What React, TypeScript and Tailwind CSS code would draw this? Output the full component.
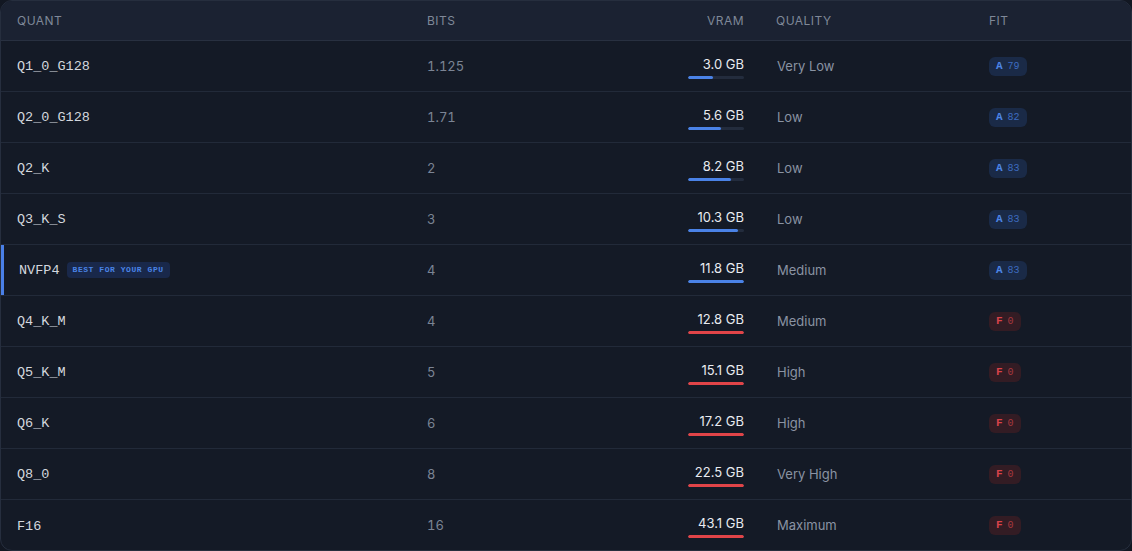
type Row = {
  quant: string;
  bits: string;
  vram: string;
  pct: number;
  fits: boolean;
  quality: string;
  score: number;
  best?: boolean;
};

const rows: Row[] = [
  { quant: 'Q1_0_G128', bits: '1.125', vram: '3.0 GB', pct: 45, fits: true, quality: 'Very Low', score: 79 },
  { quant: 'Q2_0_G128', bits: '1.71', vram: '5.6 GB', pct: 59, fits: true, quality: 'Low', score: 82 },
  { quant: 'Q2_K', bits: '2', vram: '8.2 GB', pct: 77, fits: true, quality: 'Low', score: 83 },
  { quant: 'Q3_K_S', bits: '3', vram: '10.3 GB', pct: 89, fits: true, quality: 'Low', score: 83 },
  { quant: 'NVFP4', bits: '4', vram: '11.8 GB', pct: 100, fits: true, quality: 'Medium', score: 83, best: true },
  { quant: 'Q4_K_M', bits: '4', vram: '12.8 GB', pct: 100, fits: false, quality: 'Medium', score: 0 },
  { quant: 'Q5_K_M', bits: '5', vram: '15.1 GB', pct: 100, fits: false, quality: 'High', score: 0 },
  { quant: 'Q6_K', bits: '6', vram: '17.2 GB', pct: 100, fits: false, quality: 'High', score: 0 },
  { quant: 'Q8_0', bits: '8', vram: '22.5 GB', pct: 100, fits: false, quality: 'Very High', score: 0 },
  { quant: 'F16', bits: '16', vram: '43.1 GB', pct: 100, fits: false, quality: 'Maximum', score: 0 },
];

const cols = 'grid grid-cols-[410px_160px_189px_213px_1fr] items-center';
const mono = "font-['Liberation_Mono',monospace]";

function FitBadge({ fits, score }: { fits: boolean; score: number }) {
  return (
    <span
      className={`flex h-[19px] items-center gap-[5px] rounded-md px-[7px] text-[11px] ${mono} ${
        fits ? 'bg-[#1a2a47] text-[#4d86e8]' : 'bg-[#331c24] text-[#d9434a]'
      }`}
    >
      <span className="font-bold">{fits ? 'A' : 'F'}</span>
      <span className={`text-[10px] ${fits ? 'text-[#3d6cc0]' : 'text-[#a8383f]'}`}>{score}</span>
    </span>
  );
}

export default function App() {
  return (
    <div className="h-[551px] w-full bg-[#121722] font-['Inter',sans-serif]">
      <div className="h-full overflow-hidden rounded-xl border border-[#262e3e] bg-[#141a26]">
        {/* Header */}
        <div className={`${cols} h-[40px] border-b border-[#283040] bg-[#1b2232] text-[12px] uppercase tracking-[0.04em] text-[#7f8898]`}>
          <div className="px-4">Quant</div>
          <div className="px-4">Bits</div>
          <div className="px-4 text-right">VRAM</div>
          <div className="px-4">Quality</div>
          <div className="px-4">Fit</div>
        </div>

        {rows.map((r, i) => (
          <div
            key={r.quant}
            className={`${cols} h-[51px] ${i < rows.length - 1 ? 'border-b border-[#222a39]' : ''} ${
              r.best ? 'shadow-[inset_3px_0_0_#4a80e8]' : ''
            }`}
          >
            <div className={`flex items-center gap-[7px] ${r.best ? 'pl-[18px]' : 'pl-4'}`}>
              <span className={`pt-[3px] text-[13.5px] text-[#d3d7de] ${mono}`}>{r.quant}</span>
              {r.best && (
                <span
                  className={`rounded-[4px] bg-[#19284a] px-[6px] py-[3px] text-[8px] font-bold leading-[10px] tracking-[0.07em] text-[#4a84e6] ${mono}`}
                >
                  BEST FOR YOUR GPU
                </span>
              )}
            </div>
            <div className="px-4 pt-[1px] text-[13px] tabular-nums text-[#7b8494]">{r.bits}</div>
            <div className="flex flex-col items-end px-4 pt-[2px]">
              <span className="text-[13px] leading-[16px] text-[#e8ebf0]">{r.vram}</span>
              <div className="mt-[4px] h-[3px] w-[56px] overflow-hidden rounded-full bg-[#232c3d]">
                <div
                  className={`h-full rounded-full ${r.fits ? 'bg-[#4a82e6]' : 'bg-[#e04448]'}`}
                  style={{ width: `${r.pct}%` }}
                />
              </div>
            </div>
            <div className="pl-[17px] pt-[1px] text-[13px] text-[#8a93a3]">{r.quality}</div>
            <div className="flex px-4">
              <FitBadge fits={r.fits} score={r.score} />
            </div>
          </div>
        ))}
      </div>
    </div>
  );
}
